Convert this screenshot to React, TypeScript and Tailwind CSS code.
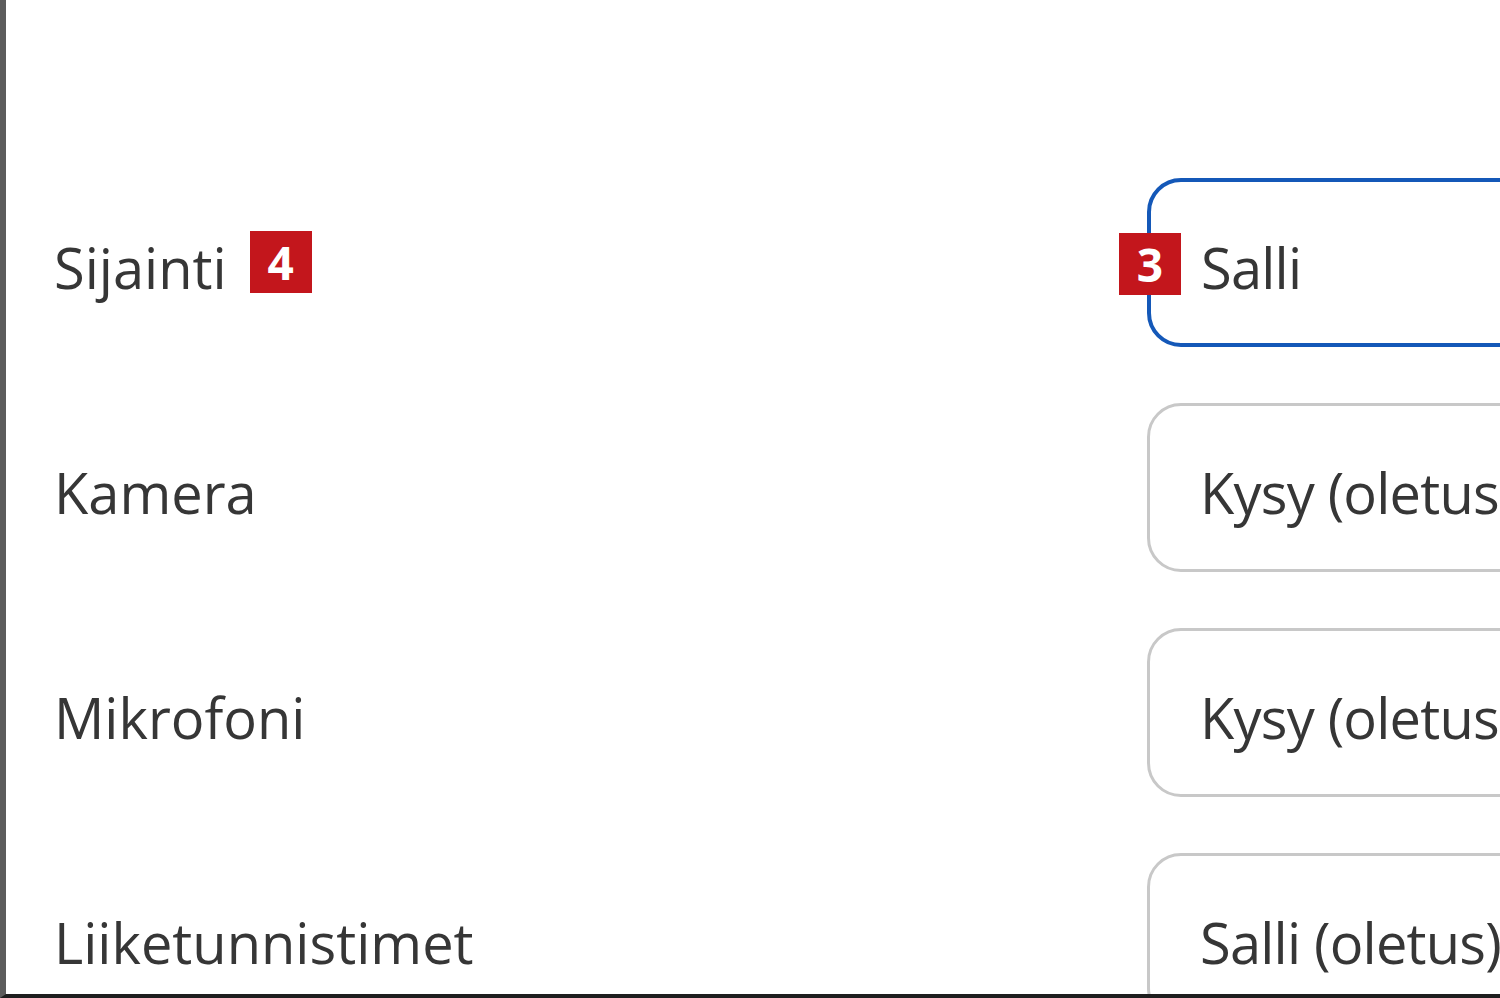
import React from "react";

const rows = [
  { label: "Sijainti", value: "Salli", focused: true, labelBadge: "4", valueBadge: "3" },
  { label: "Kamera", value: "Kysy (oletus)" },
  { label: "Mikrofoni", value: "Kysy (oletus)" },
  { label: "Liiketunnistimet", value: "Salli (oletus)" },
];

function Badge({ n }: { n: string }) {
  return (
    <span className="inline-flex h-[62px] w-[62px] items-center justify-center bg-[#c3161c] text-[46px] font-bold leading-none text-white">
      {n}
    </span>
  );
}

export default function App() {
  return (
    <div
      className="h-[998px] w-[1500px] overflow-hidden bg-white border-l-[6px] border-l-[#5c5c5c] border-b-[4px] border-b-[#1e1e1e] text-[#363636]"
      style={{ fontFamily: '"Open Sans", "Noto Sans", sans-serif' }}
    >
      <div className="flex flex-col gap-[56px] pt-[178px]">
        {rows.map((r) => (
          <div key={r.label} className="flex h-[169px] items-center justify-between">
            <div className="flex items-center gap-[23px] pl-[48px] text-[56px]">
              <span className="pt-[10px] leading-[1.3]">{r.label}</span>
              {r.labelBadge && <Badge n={r.labelBadge} />}
            </div>
            <div
              className={
                "relative mr-[-200px] flex h-full w-[553px] items-center rounded-[34px] bg-white pl-[50px] text-[56px] " +
                (r.focused ? "border-[4px] border-[#1458b8]" : "border-[3px] border-[#c8c8c8]")
              }
            >
              {r.valueBadge && (
                <span className="absolute left-[-32px] top-1/2 -translate-y-[45px]">
                  <Badge n={r.valueBadge} />
                </span>
              )}
              <span className="whitespace-nowrap pt-[10px] leading-[1.3] tracking-[-0.8px]">{r.value}</span>
            </div>
          </div>
        ))}
      </div>
    </div>
  );
}
